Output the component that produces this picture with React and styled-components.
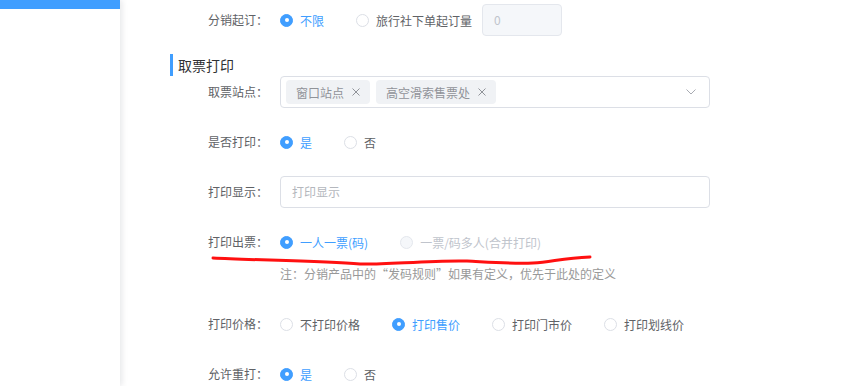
import React from "react";
import styled, { createGlobalStyle, css } from "styled-components";

const GlobalStyle = createGlobalStyle`
  html, body { margin: 0; padding: 0; background: #fff; }
  body {
    width: 855px; height: 386px; overflow: hidden;
    font-family: "Noto Sans CJK SC", "Noto Sans", sans-serif;
    font-size: 12px; color: #606266;
  }
  * { box-sizing: border-box; }
`;

const Page = styled.div`
  display: flex;
  height: 386px;
  overflow: hidden;
`;

const Sidebar = styled.aside`
  width: 120px;
  flex: none;
  background: #fff;
  box-shadow: 2px 0 6px rgba(0, 21, 41, 0.1);
  position: relative;
  z-index: 1;
`;

const ActiveMenu = styled.div`
  height: 9px;
  background: #409eff;
`;

const Main = styled.main`
  flex: 1;
  padding: 4px 0 0 50px;
`;

const FormItem = styled.div`
  display: flex;
  align-items: flex-start;
  margin-bottom: ${(p) => (p.$mb != null ? p.$mb : 18)}px;
  position: relative;
`;

const Label = styled.label`
  width: 110px;
  flex: none;
  text-align: right;
  padding-right: 12px;
  line-height: 32px;
  font-size: 12px;
  color: #606266;
`;

const Content = styled.div`
  width: 430px;
  display: flex;
  flex-direction: column;
`;

const SectionTitle = styled.h3`
  margin: 0;
  height: 22px;
  line-height: 22px;
  border-left: 3px solid #409eff;
  padding-left: 5px;
  font-size: 14px;
  font-weight: normal;
  color: #303133;
`;

const RadioGroup = styled.div`
  display: flex;
  align-items: center;
  height: 32px;
  gap: 32px;
`;

const RadioItem = styled.span`
  display: inline-flex;
  align-items: center;
  gap: 7px;
  font-size: 12px;
  white-space: nowrap;
  color: ${(p) => (p.$disabled ? "#c0c4cc" : p.$checked ? "#409eff" : "#606266")};
`;

const Circle = styled.span`
  width: 13px;
  height: 13px;
  border-radius: 50%;
  border: 1px solid #dcdfe6;
  background: #fff;
  position: relative;
  flex: none;
  ${(p) =>
    p.$checked &&
    css`
      border-color: #409eff;
      background: #409eff;
      &::after {
        content: "";
        position: absolute;
        left: 50%;
        top: 50%;
        width: 4px;
        height: 4px;
        margin: -2px 0 0 -2px;
        border-radius: 50%;
        background: #fff;
      }
    `}
  ${(p) =>
    p.$disabled &&
    css`
      border-color: #e4e7ed;
      background: #f5f7fa;
    `}
`;

const Radio = ({ checked, disabled, children }) => (
  <RadioItem $checked={checked} $disabled={disabled}>
    <Circle $checked={checked} $disabled={disabled} />
    {children}
  </RadioItem>
);

const Inline = styled.div`
  display: flex;
  align-items: center;
  height: 32px;
`;

const SmallInput = styled.div`
  width: 80px;
  height: 32px;
  margin-left: 10px;
  border: 1px solid #e4e7ed;
  background: #f5f7fa;
  border-radius: 4px;
  padding: 0 11px;
  line-height: 30px;
  color: #c0c4cc;
  font-size: 12px;
`;

const TextInput = styled.div`
  height: 32px;
  border: 1px solid #dcdfe6;
  border-radius: 4px;
  padding: 0 11px;
  line-height: 30px;
  color: #b4b7bd;
  font-size: 12px;
  background: #fff;
`;

const Select = styled.div`
  height: 32px;
  border: 1px solid #dcdfe6;
  border-radius: 4px;
  display: flex;
  align-items: center;
  padding: 0 13px 0 5px;
  gap: 6px;
`;

const Tag = styled.span`
  display: inline-flex;
  align-items: center;
  height: 24px;
  padding: 0 10px 0 10px;
  background: #f0f2f5;
  border-radius: 4px;
  color: #909399;
  font-size: 12px;
  gap: 8px;
`;

const Arrow = styled.svg`
  margin-left: auto;
`;

const Note = styled.div`
  line-height: 32px;
  font-size: 12px;
  color: #999;
`;

const Scribble = styled.svg`
  position: absolute;
  left: 42px;
  top: 28px;
  overflow: visible;
  pointer-events: none;
`;

const CloseIcon = () => (
  <svg width="8" height="8" viewBox="0 0 8 8">
    <path d="M0.5 0.5 L7.5 7.5 M7.5 0.5 L0.5 7.5" stroke="#909399" strokeWidth="1" fill="none" />
  </svg>
);

export default function App() {
  return (
    <>
      <GlobalStyle />
      <Page>
        <Sidebar>
          <ActiveMenu />
        </Sidebar>
        <Main>
          <FormItem>
            <Label>分销起订：</Label>
            <Inline>
              <RadioGroup>
                <Radio checked>不限</Radio>
                <Radio>旅行社下单起订量</Radio>
              </RadioGroup>
              <SmallInput>0</SmallInput>
            </Inline>
          </FormItem>

          <SectionTitle>取票打印</SectionTitle>

          <FormItem>
            <Label>取票站点：</Label>
            <Content>
              <Select>
                <Tag>
                  窗口站点
                  <CloseIcon />
                </Tag>
                <Tag>
                  高空滑索售票处
                  <CloseIcon />
                </Tag>
                <Arrow width="10" height="6" viewBox="0 0 10 6">
                  <path d="M0.5 0.5 L5 5 L9.5 0.5" stroke="#a8abb2" strokeWidth="1" fill="none" />
                </Arrow>
              </Select>
            </Content>
          </FormItem>

          <FormItem>
            <Label>是否打印：</Label>
            <RadioGroup>
              <Radio checked>是</Radio>
              <Radio>否</Radio>
            </RadioGroup>
          </FormItem>

          <FormItem>
            <Label>打印显示：</Label>
            <Content>
              <TextInput>打印显示</TextInput>
            </Content>
          </FormItem>

          <FormItem>
            <Label>打印出票：</Label>
            <Content>
              <RadioGroup>
                <Radio checked>一人一票(码)</Radio>
                <Radio disabled>一票/码多人(合并打印)</Radio>
              </RadioGroup>
              <Note>注：分销产品中的“发码规则”如果有定义，优先于此处的定义</Note>
            </Content>
            <Scribble width="380" height="14" viewBox="0 0 380 14">
              <path
                d="M1 4 C 40 6, 110 7, 148 10 C 170 11, 220 6, 255 7 C 275 8, 300 10, 321 9 C 340 8, 350 4, 378 3"
                stroke="#ff1010"
                strokeWidth="3"
                strokeLinecap="round"
                fill="none"
              />
            </Scribble>
          </FormItem>

          <FormItem>
            <Label>打印价格：</Label>
            <RadioGroup>
              <Radio>不打印价格</Radio>
              <Radio checked>打印售价</Radio>
              <Radio>打印门市价</Radio>
              <Radio>打印划线价</Radio>
            </RadioGroup>
          </FormItem>

          <FormItem>
            <Label>允许重打：</Label>
            <RadioGroup>
              <Radio checked>是</Radio>
              <Radio>否</Radio>
            </RadioGroup>
          </FormItem>
        </Main>
      </Page>
    </>
  );
}
